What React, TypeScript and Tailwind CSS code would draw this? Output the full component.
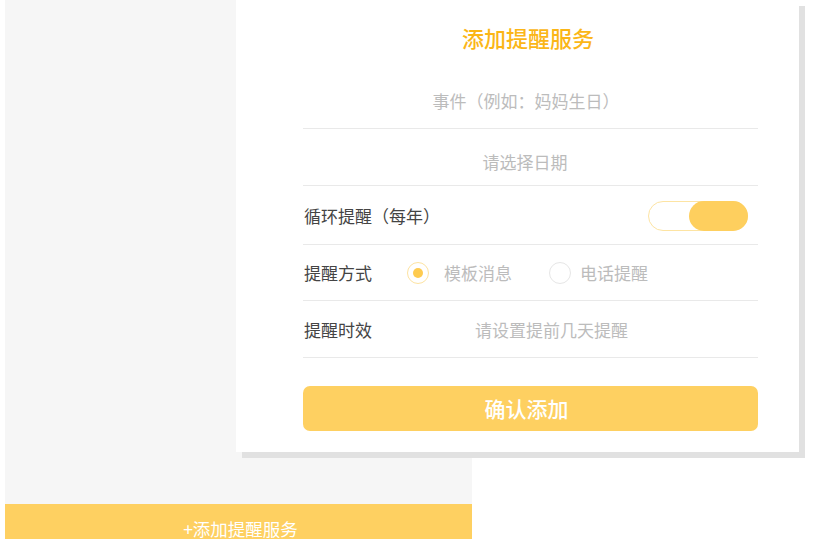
import React from 'react'

const font = { fontFamily: '"Noto Sans CJK SC", "Noto Sans", sans-serif' }

function Radio({ checked }: { checked: boolean }) {
  return (
    <span
      className={
        checked
          ? 'flex h-[22px] w-[22px] items-center justify-center rounded-full border border-[#fde3a1] bg-white'
          : 'flex h-[22px] w-[22px] items-center justify-center rounded-full border border-[#e6e6e6] bg-white'
      }
    >
      {checked && <span className="h-[10px] w-[10px] rounded-full bg-[#fecb4f]" />}
    </span>
  )
}

export default function App() {
  return (
    <div className="relative h-[539px] w-[824px] overflow-hidden bg-white" style={font}>
      {/* page behind the dialog */}
      <div className="ml-[5px] flex h-full w-[467px] flex-col">
        <div className="h-[504px] shrink-0 bg-[#f6f6f6]" />
        <div className="flex flex-1 justify-center bg-[#fed061] pl-[4px] pt-[13px] text-[17.5px] leading-[24px] text-white">
          +添加提醒服务
        </div>
      </div>

      {/* dialog */}
      <div className="absolute left-[236px] top-0 h-[452px] w-[563px] bg-white pl-[67px] pr-[41px] shadow-[6px_6px_0_#e1e1e1]">
        <div className="flex h-[74px] items-center justify-center pr-[5px] text-[22px] font-medium text-[#fbb617]">
          添加提醒服务
        </div>

        <div className="flex h-[55px] items-center justify-center border-b border-[#e9e9e9] pr-[9px] text-[17px] text-[#bcbcbc]">
          事件（例如：妈妈生日）
        </div>

        <div className="flex h-[57px] items-center justify-center border-b border-[#e9e9e9] pr-[11px] pt-[10px] text-[17px] text-[#bcbcbc]">
          请选择日期
        </div>

        <div className="flex h-[59px] items-center justify-between border-b border-[#e9e9e9] pl-[1px] pr-[10px] pt-[2px] text-[17px] text-[#444]">
          <span>循环提醒（每年）</span>
          <span className="flex h-[30px] w-[100px] justify-end rounded-full border border-[#fde4a3]">
            <span className="-m-px h-[30px] w-[59px] rounded-full bg-[#fecf5e]" />
          </span>
        </div>

        <div className="flex h-[56px] items-center border-b border-[#e9e9e9] pl-[1px] pt-[1px] text-[17px]">
          <span className="w-[103px] text-[#444]">提醒方式</span>
          <Radio checked />
          <span className="ml-[15px] text-[#bcbcbc]">模板消息</span>
          <span className="ml-[37px]">
            <Radio checked={false} />
          </span>
          <span className="ml-[9px] text-[#bcbcbc]">电话提醒</span>
        </div>

        <div className="flex h-[57px] items-center border-b border-[#e9e9e9] pl-[1px] pt-[2px] text-[17px]">
          <span className="w-[103px] text-[#444]">提醒时效</span>
          <span className="ml-[68px] text-[#bcbcbc]">请设置提前几天提醒</span>
        </div>

        <button className="mt-[28px] flex h-[45px] w-full items-center justify-center rounded-[7px] bg-[#fed061] pr-[8px] text-[21px] font-medium text-white">
          确认添加
        </button>
      </div>
    </div>
  )
}
